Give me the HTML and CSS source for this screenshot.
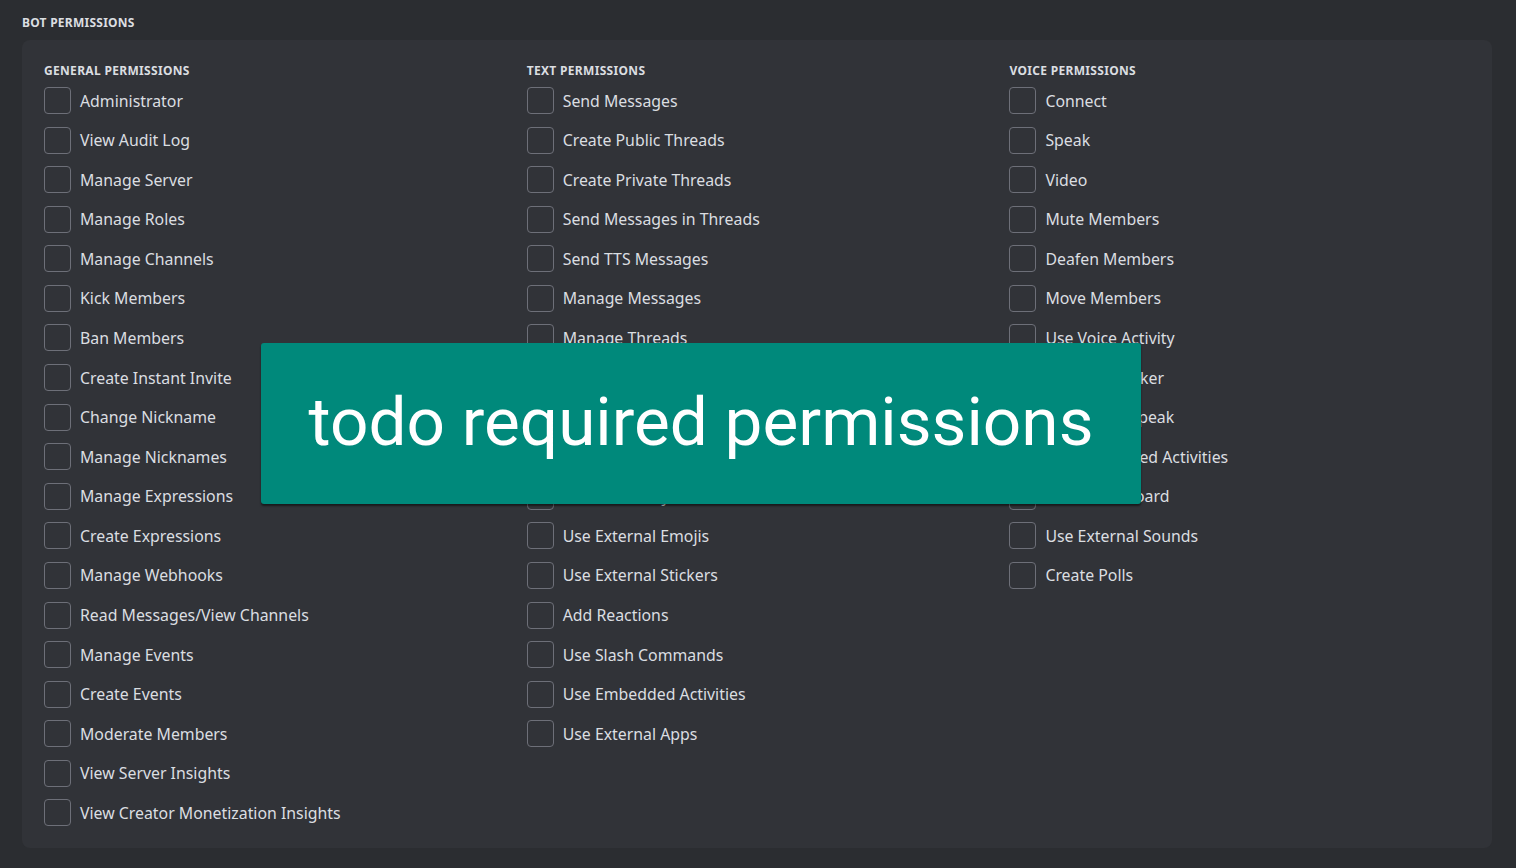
FILE: index.html
```html
<!DOCTYPE html>
<html>
<head>
<meta charset="utf-8">
<link rel="stylesheet" href="styles.css">
</head>
<body>
<div class="page">
  <div class="title">Bot Permissions</div>
  <div class="panel">
    <div class="col">
      <div class="head">General Permissions</div>
      <ul class="list">
        <li class="row"><span class="box"></span><span class="label">Administrator</span></li>
        <li class="row"><span class="box"></span><span class="label">View Audit Log</span></li>
        <li class="row"><span class="box"></span><span class="label">Manage Server</span></li>
        <li class="row"><span class="box"></span><span class="label">Manage Roles</span></li>
        <li class="row"><span class="box"></span><span class="label">Manage Channels</span></li>
        <li class="row"><span class="box"></span><span class="label">Kick Members</span></li>
        <li class="row"><span class="box"></span><span class="label">Ban Members</span></li>
        <li class="row"><span class="box"></span><span class="label">Create Instant Invite</span></li>
        <li class="row"><span class="box"></span><span class="label">Change Nickname</span></li>
        <li class="row"><span class="box"></span><span class="label">Manage Nicknames</span></li>
        <li class="row"><span class="box"></span><span class="label">Manage Expressions</span></li>
        <li class="row"><span class="box"></span><span class="label">Create Expressions</span></li>
        <li class="row"><span class="box"></span><span class="label">Manage Webhooks</span></li>
        <li class="row"><span class="box"></span><span class="label">Read Messages/View Channels</span></li>
        <li class="row"><span class="box"></span><span class="label">Manage Events</span></li>
        <li class="row"><span class="box"></span><span class="label">Create Events</span></li>
        <li class="row"><span class="box"></span><span class="label">Moderate Members</span></li>
        <li class="row"><span class="box"></span><span class="label">View Server Insights</span></li>
        <li class="row"><span class="box"></span><span class="label">View Creator Monetization Insights</span></li>
      </ul>
    </div>
    <div class="col">
      <div class="head">Text Permissions</div>
      <ul class="list">
        <li class="row"><span class="box"></span><span class="label">Send Messages</span></li>
        <li class="row"><span class="box"></span><span class="label">Create Public Threads</span></li>
        <li class="row"><span class="box"></span><span class="label">Create Private Threads</span></li>
        <li class="row"><span class="box"></span><span class="label">Send Messages in Threads</span></li>
        <li class="row"><span class="box"></span><span class="label">Send TTS Messages</span></li>
        <li class="row"><span class="box"></span><span class="label">Manage Messages</span></li>
        <li class="row"><span class="box"></span><span class="label">Manage Threads</span></li>
        <li class="row"><span class="box"></span><span class="label">Embed Links</span></li>
        <li class="row"><span class="box"></span><span class="label">Attach Files</span></li>
        <li class="row"><span class="box"></span><span class="label">Read Message History</span></li>
        <li class="row"><span class="box"></span><span class="label">Mention Everyone</span></li>
        <li class="row"><span class="box"></span><span class="label">Use External Emojis</span></li>
        <li class="row"><span class="box"></span><span class="label">Use External Stickers</span></li>
        <li class="row"><span class="box"></span><span class="label">Add Reactions</span></li>
        <li class="row"><span class="box"></span><span class="label">Use Slash Commands</span></li>
        <li class="row"><span class="box"></span><span class="label">Use Embedded Activities</span></li>
        <li class="row"><span class="box"></span><span class="label">Use External Apps</span></li>
      </ul>
    </div>
    <div class="col">
      <div class="head">Voice Permissions</div>
      <ul class="list">
        <li class="row"><span class="box"></span><span class="label">Connect</span></li>
        <li class="row"><span class="box"></span><span class="label">Speak</span></li>
        <li class="row"><span class="box"></span><span class="label">Video</span></li>
        <li class="row"><span class="box"></span><span class="label">Mute Members</span></li>
        <li class="row"><span class="box"></span><span class="label">Deafen Members</span></li>
        <li class="row"><span class="box"></span><span class="label">Move Members</span></li>
        <li class="row"><span class="box"></span><span class="label">Use Voice Activity</span></li>
        <li class="row"><span class="box"></span><span class="label">Priority Speaker</span></li>
        <li class="row"><span class="box"></span><span class="label">Request to Speak</span></li>
        <li class="row"><span class="box"></span><span class="label">Use Embedded Activities</span></li>
        <li class="row"><span class="box"></span><span class="label">Use Soundboard</span></li>
        <li class="row"><span class="box"></span><span class="label">Use External Sounds</span></li>
        <li class="row"><span class="box"></span><span class="label">Create Polls</span></li>
      </ul>
    </div>
  </div>
  <div class="todo">todo required permissions</div>
</div>
</body>
</html>
```

FILE: styles.css
```css
html, body {
  margin: 0;
  padding: 0;
  background: #2b2d31;
  width: 1516px;
  height: 868px;
  overflow: hidden;
}
body {
  font-family: "Noto Sans", "Open Sans", sans-serif;
  color: #dbdee1;
}
.page {
  position: relative;
  padding: 15px 24px 20px 22px;
}
.title {
  font-size: 12px;
  font-weight: 700;
  text-transform: uppercase;
  letter-spacing: 0.25px;
  line-height: 15px;
  color: #dbdee1;
  margin-bottom: 10px;
}
.panel {
  background: #313338;
  border-radius: 8px;
  display: grid;
  grid-template-columns: 482.7px 482.7px 1fr;
  padding: 23px 0 20px 22px;
  height: 808px;
  box-sizing: border-box;
}
.head {
  font-size: 12px;
  font-weight: 700;
  text-transform: uppercase;
  letter-spacing: 0.32px;
  line-height: 16px;
  color: #dbdee1;
  margin-bottom: 8px;
}
.list {
  list-style: none;
  margin: 0;
  padding: 0;
  display: flex;
  flex-direction: column;
  gap: 12.58px;
}
.row {
  display: flex;
  align-items: center;
  height: 27px;
  gap: 9px;
}
.box {
  width: 27px;
  height: 27px;
  box-sizing: border-box;
  border: 1px solid #6d6f78;
  border-radius: 4px;
  flex: none;
}
.label {
  font-size: 15.85px;
  line-height: 20px;
  color: #dbdee1;
}
.todo {
  position: absolute;
  left: 261px;
  top: 343px;
  width: 880px;
  height: 161px;
  padding-bottom: 4px;
  box-sizing: border-box;
  background: #00897b;
  border-radius: 3px;
  box-shadow: 0 2px 2px rgba(0, 0, 0, 0.5);
  display: flex;
  align-items: center;
  justify-content: center;
  font-family: Roboto, sans-serif;
  font-size: 67.5px;
  color: #ffffff;
}
```
